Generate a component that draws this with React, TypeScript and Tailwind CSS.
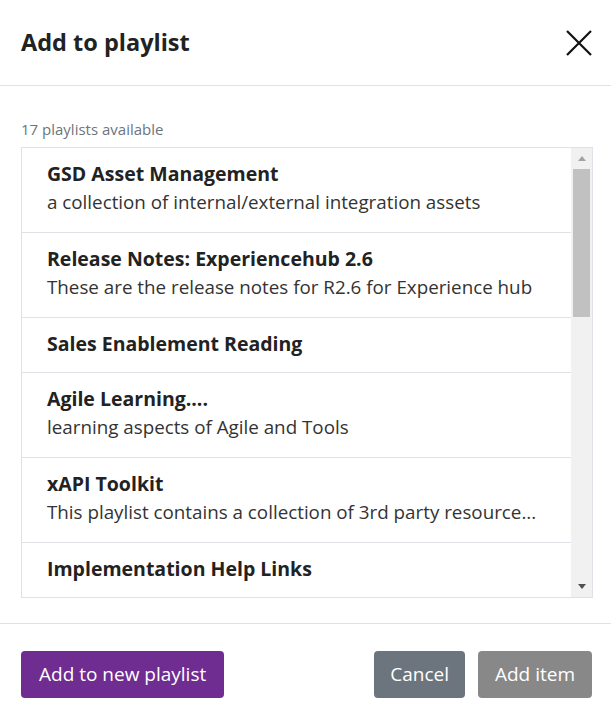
import React from 'react'

const playlists = [
  { title: 'GSD Asset Management', desc: 'a collection of internal/external integration assets' },
  { title: 'Release Notes: Experiencehub 2.6', desc: 'These are the release notes for R2.6 for Experience hub' },
  { title: 'Sales Enablement Reading', desc: '' },
  { title: 'Agile Learning....', desc: 'learning aspects of Agile and Tools' },
  { title: 'xAPI Toolkit', desc: 'This playlist contains a collection of 3rd party resource...' },
  { title: 'Implementation Help Links', desc: '' },
]

const body = { fontFamily: '"Open Sans", sans-serif' }

export default function App() {
  return (
    <div className="w-[611px] h-[715px] bg-white flex flex-col text-[#212529]" style={{ fontFamily: '"Open Sans", "Noto Sans", sans-serif' }}>
      {/* header */}
      <div className="h-[86px] flex items-center justify-between pl-[21px] pr-[17px] border-b border-[#dee2e6]">
        <h2 className="text-[23.5px] font-bold text-[#222]">Add to playlist</h2>
        <button className="w-[30px] h-[30px] flex items-center justify-center">
          <svg width="28" height="28" viewBox="0 0 28 28" fill="none" stroke="#111" strokeWidth="2.2">
            <path d="M2 2L26 26M26 2L2 26" />
          </svg>
        </button>
      </div>

      {/* body */}
      <div className="flex-1 pl-[21px] pr-[18px] pt-[32px]">
        <p className="text-[15px] text-[#6c757d] mb-[6px]" style={body}>17 playlists available</p>
        <div className="h-[451px] border border-[#dee2e6] flex overflow-hidden">
          <ul className="flex-1 overflow-hidden">
            {playlists.map((p) => (
              <li key={p.title} className={`px-[25px] pt-[14px] border-b border-[#dee2e6] ${p.desc ? 'pb-[15px]' : 'pb-[16px]'}`}>
                <div className="text-[19.5px] font-bold leading-[24px] text-[#222]">{p.title}</div>
                {p.desc && (
                  <div className="text-[18.8px] leading-[29px] text-[#333] mt-[2px]" style={body}>{p.desc}</div>
                )}
              </li>
            ))}
          </ul>
          <div className="w-[21px] bg-[#f1f1f1] flex flex-col items-center">
            <div className="h-[21px] flex items-center justify-center">
              <svg width="8" height="5" viewBox="0 0 8 5"><path d="M0 5L4 0L8 5Z" fill="#a3a3a3" /></svg>
            </div>
            <div className="w-[17px] h-[148px] bg-[#c1c1c1]" />
            <div className="flex-1" />
            <div className="h-[21px] flex items-center justify-center">
              <svg width="8" height="5" viewBox="0 0 8 5"><path d="M0 0L8 0L4 5Z" fill="#505050" /></svg>
            </div>
          </div>
        </div>
      </div>

      {/* footer */}
      <div className="h-[92px] border-t border-[#dee2e6] flex items-start justify-between pl-[21px] pr-[19px] pt-[27px]">
        <button className="h-[47px] px-[18px] rounded-[4px] bg-[#6f2c91] text-white text-[19px]" style={body}>Add to new playlist</button>
        <div className="flex gap-[13px]">
          <button className="h-[47px] px-[16px] rounded-[4px] bg-[#6c757d] text-white text-[19px]" style={body}>Cancel</button>
          <button className="h-[47px] px-[17px] rounded-[4px] bg-[#888888] text-white text-[19px]" style={body}>Add item</button>
        </div>
      </div>
    </div>
  )
}
